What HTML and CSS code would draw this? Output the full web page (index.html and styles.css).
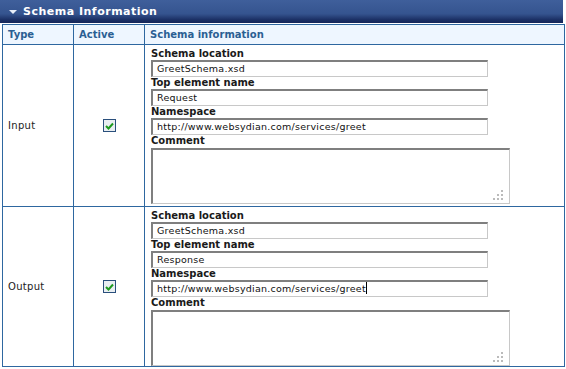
FILE: index.html
```html
<!DOCTYPE html>
<html>
<head>
<meta charset="utf-8">
<link rel="stylesheet" href="styles.css">
</head>
<body>
<div class="panel">
  <div class="bar"><span class="tri"></span><span class="title">Schema Information</span></div>
  <table class="grid">
    <colgroup><col class="c1"><col class="c2"><col class="c3"></colgroup>
    <thead>
      <tr><th>Type</th><th>Active</th><th>Schema information</th></tr>
    </thead>
    <tbody>
      <tr>
        <td class="type">Input</td>
        <td class="act"><span class="chk"><svg width="9" height="8" viewBox="0 0 9 8"><path d="M1 4 L3.5 6.5 L8 1.5" fill="none" stroke="#1e9a1e" stroke-width="2"/></svg></span></td>
        <td class="info">
          <div class="lbl">Schema location</div>
          <div class="inp">GreetSchema.xsd</div>
          <div class="lbl">Top element name</div>
          <div class="inp">Request</div>
          <div class="lbl">Namespace</div>
          <div class="inp">http://www.websydian.com/services/greet</div>
          <div class="lbl">Comment</div>
          <div class="ta"><span class="grip"></span></div>
        </td>
      </tr>
      <tr class="last">
        <td class="type">Output</td>
        <td class="act"><span class="chk"><svg width="9" height="8" viewBox="0 0 9 8"><path d="M1 4 L3.5 6.5 L8 1.5" fill="none" stroke="#1e9a1e" stroke-width="2"/></svg></span></td>
        <td class="info">
          <div class="lbl">Schema location</div>
          <div class="inp">GreetSchema.xsd</div>
          <div class="lbl">Top element name</div>
          <div class="inp">Response</div>
          <div class="lbl">Namespace</div>
          <div class="inp">http://www.websydian.com/services/greet<span class="caret"></span></div>
          <div class="lbl">Comment</div>
          <div class="ta"><span class="grip"></span></div>
        </td>
      </tr>
    </tbody>
  </table>
</div>
</body>
</html>
```
FILE: styles.css
```css
html, body { margin: 0; padding: 0; background: #fff; }
body { font-family: "DejaVu Sans", Verdana, sans-serif; font-size: 11px; color: #222; }
.panel { width: 564px; }
.bar {
  height: 23px; width: 563px; box-sizing: border-box;
  background: linear-gradient(to bottom, #3f5f9b 0%, #35548f 60%, #1c3166 85%, #15265a 100%);
  display: flex; align-items: center; padding-left: 9px;
}
.tri { width: 0; height: 0; border-left: 4px solid transparent; border-right: 4px solid transparent; border-top: 4px solid #e8eef8; margin-right: 6px; margin-top: 1px; }
.title { color: #fff; font-weight: bold; font-size: 11px; letter-spacing: 0.5px; }
.grid { border-collapse: collapse; margin-left: 2px; margin-top: 1px; width: 562px; table-layout: fixed; }
.c1 { width: 71px; } .c2 { width: 71px; } .c3 { width: 420px; }
.grid th, .grid td { border: 1px solid #2e67a0; }
.grid th { background: #eef6ff; color: #2b5f93; font-size: 10px; font-weight: bold; text-align: left; height: 19px; padding: 0 0 0 5px; }
.type { padding: 0 0 0 5px; vertical-align: middle; font-size: 10px; color: #222; letter-spacing: 0.3px; }
.act { text-align: center; vertical-align: middle; padding: 0; }
.chk { display: inline-block; width: 11px; height: 11px; border: 1px solid #2a4f7c; background: #e9eef2; position: relative; vertical-align: middle; margin-left: 1px; }
.chk svg { position: absolute; left: 1px; top: 2px; }
.info { padding: 3px 0 2px 6px; vertical-align: top; }
.last .info { padding-bottom: 0; }
.lbl { font-weight: bold; font-size: 10px; height: 12px; line-height: 12px; color: #1a1a1a; }
.inp {
  width: 337px; height: 17px; box-sizing: border-box;
  border-top: 2px solid #7f7f7f; border-left: 2px solid #7f7f7f; border-right: 1px solid #c8c8c8; border-bottom: 1px solid #c8c8c8;
  font-size: 9.5px; line-height: 14px; padding-left: 4px; color: #111; letter-spacing: 0.25px; white-space: nowrap;
}
.caret { display: inline-block; width: 1px; height: 12px; background: #000; vertical-align: -2px; }
.ta {
  width: 359px; height: 56px; box-sizing: border-box; position: relative; margin-top: 1px;
  border-top: 2px solid #7f7f7f; border-left: 2px solid #7f7f7f; border-right: 1px solid #c8c8c8; border-bottom: 1px solid #c8c8c8;
}
.grip { position: absolute; right: 6px; bottom: 3px; width: 10px; height: 10px;
  background:
    radial-gradient(#bbb 0 0) 8px 0/2px 2px no-repeat,
    radial-gradient(#bbb 0 0) 8px 4px/2px 2px no-repeat,
    radial-gradient(#bbb 0 0) 4px 4px/2px 2px no-repeat,
    radial-gradient(#bbb 0 0) 8px 8px/2px 2px no-repeat,
    radial-gradient(#bbb 0 0) 4px 8px/2px 2px no-repeat,
    radial-gradient(#bbb 0 0) 0 8px/2px 2px no-repeat;
}
```
